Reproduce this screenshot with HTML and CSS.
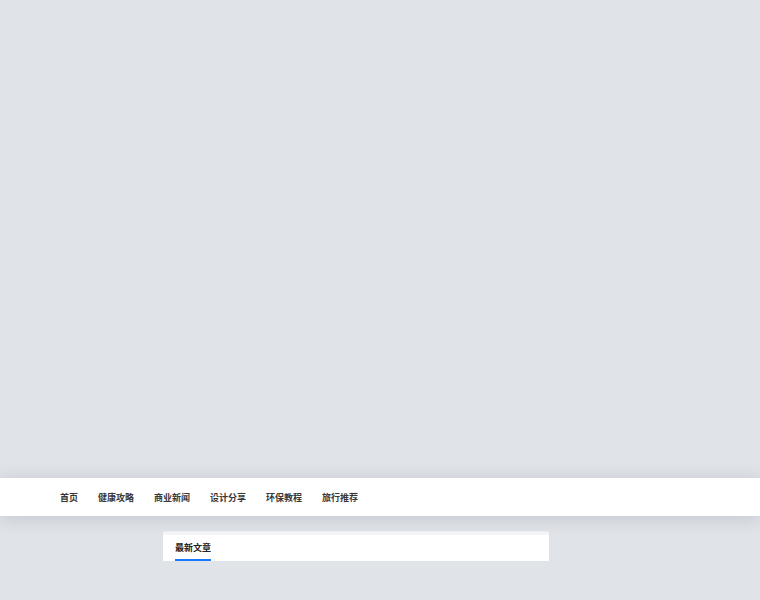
FILE: index.html
```html
<!DOCTYPE html>
<html lang="zh">
<head>
<meta charset="utf-8">
<link rel="stylesheet" href="styles.css">
</head>
<body>
<div class="banner"></div>
<nav class="nav">
  <a class="nav-item">首页</a>
  <a class="nav-item">健康攻略</a>
  <a class="nav-item">商业新闻</a>
  <a class="nav-item">设计分享</a>
  <a class="nav-item">环保教程</a>
  <a class="nav-item">旅行推荐</a>
</nav>
<main class="main">
  <section class="card">
    <div class="card-head">
      <span class="tab">最新文章</span>
    </div>
  </section>
</main>
</body>
</html>
```
FILE: styles.css
```css
html, body {
  margin: 0;
  padding: 0;
  background: #e0e3e8;
  font-family: "Noto Sans CJK SC", "Noto Sans", sans-serif;
  color: #333;
  overflow: hidden;
}
.banner {
  height: 478px;
}
.nav {
  height: 38px;
  background: #fff;
  display: flex;
  align-items: center;
  gap: 20px;
  padding-left: 60px;
  box-shadow: 0 2px 18px rgba(60, 70, 90, 0.18);
  position: relative;
}
.nav-item {
  font-size: 9px;
  font-weight: bold;
  color: #383838;
  line-height: 1;
}
.main {
  padding: 15px 0 0 163px;
}
.card {
  width: 386px;
  background: #fff;
  border-radius: 3px 3px 0 0;
  border-top: 1px solid #f0f1f4;
  box-shadow: 0 0 1px rgba(0,0,0,0.05);
}
.card-head {
  height: 29px;
  padding: 0 12px;
  display: flex;
  align-items: flex-end;
  background: linear-gradient(#f6f6f8 0, #f6f6f8 3px, #fff 3px);
}
.tab {
  font-size: 9px;
  font-weight: bold;
  color: #222;
  line-height: 1;
  padding-bottom: 7px;
  border-bottom: 2px solid #1677ff;
}
```
